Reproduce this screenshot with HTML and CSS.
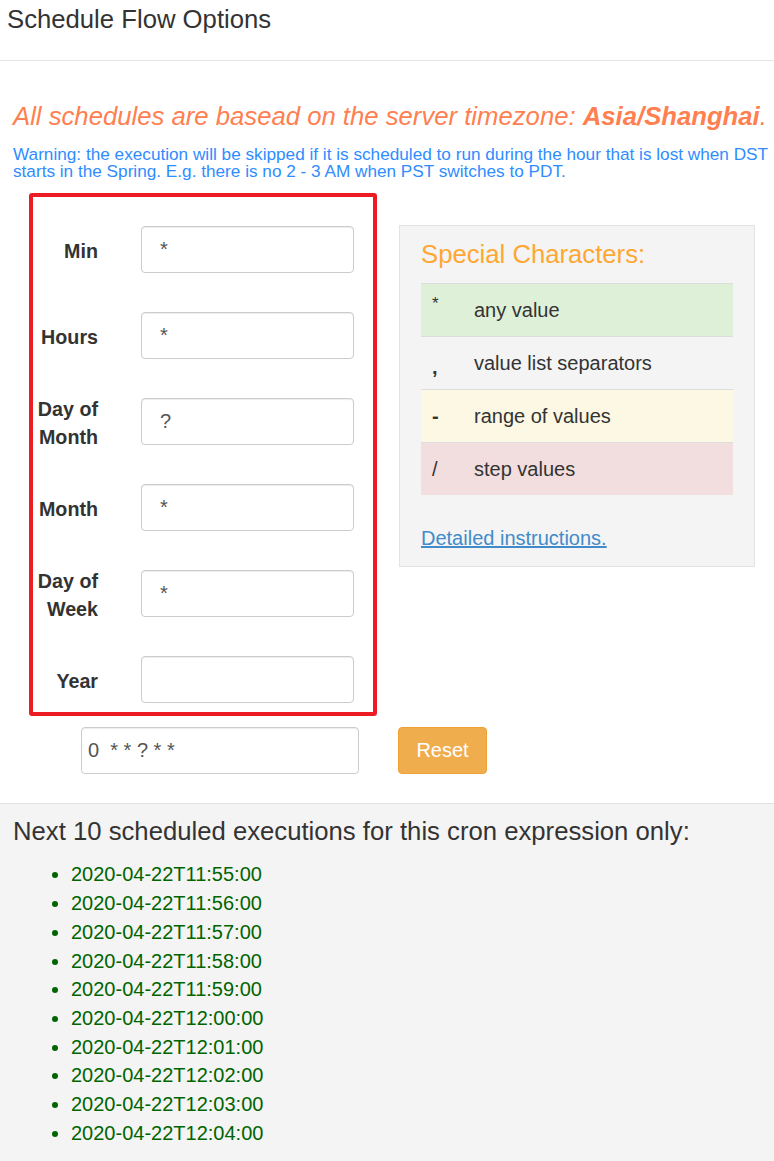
FILE: index.html
```html
<!DOCTYPE html>
<html lang="en">
<head>
<meta charset="utf-8">
<title>Schedule Flow Options</title>
<link rel="stylesheet" href="styles.css">
</head>
<body>
<div class="header">
  <h1 class="title">Schedule Flow Options</h1>
</div>
<div class="content">
  <p class="tz">All schedules are basead on the server timezone: <b>Asia/Shanghai</b>.</p>
  <p class="warn">Warning: the execution will be skipped if it is scheduled to run during the hour that is lost when DST<br>starts in the Spring. E.g. there is no 2 - 3 AM when PST switches to PDT.</p>
  <div class="main">
    <div class="fields">
      <div class="field"><label class="lbl">Min</label><input class="inp" type="text" value="*"></div>
      <div class="field"><label class="lbl">Hours</label><input class="inp" type="text" value="*"></div>
      <div class="field"><label class="lbl">Day of Month</label><input class="inp" type="text" value="?"></div>
      <div class="field"><label class="lbl">Month</label><input class="inp" type="text" value="*"></div>
      <div class="field"><label class="lbl">Day of Week</label><input class="inp" type="text" value="*"></div>
      <div class="field"><label class="lbl">Year</label><input class="inp" type="text" value=""></div>
    </div>
    <div class="panel">
      <div class="panel-title">Special Characters:</div>
      <div class="chars">
        <div class="crow green"><span class="sym sym-star">*</span><span class="desc">any value</span></div>
        <div class="crow"><span class="sym sym-comma">,</span><span class="desc">value list separators</span></div>
        <div class="crow yellow"><span class="sym sym-dash">-</span><span class="desc">range of values</span></div>
        <div class="crow red"><span class="sym">/</span><span class="desc">step values</span></div>
      </div>
      <a class="link" href="#">Detailed instructions.</a>
    </div>
  </div>
  <div class="expr-row">
    <input class="expr" type="text" value="0  * * ? * *">
    <button class="reset" type="button">Reset</button>
  </div>
</div>
<div class="results">
  <h2 class="results-title">Next 10 scheduled executions for this cron expression only:</h2>
  <ul class="list">
    <li>2020-04-22T11:55:00</li>
    <li>2020-04-22T11:56:00</li>
    <li>2020-04-22T11:57:00</li>
    <li>2020-04-22T11:58:00</li>
    <li>2020-04-22T11:59:00</li>
    <li>2020-04-22T12:00:00</li>
    <li>2020-04-22T12:01:00</li>
    <li>2020-04-22T12:02:00</li>
    <li>2020-04-22T12:03:00</li>
    <li>2020-04-22T12:04:00</li>
  </ul>
</div>
</body>
</html>
```
FILE: styles.css
```css
* { box-sizing: border-box; }
html, body {
  margin: 0;
  padding: 0;
  background: #fff;
  font-family: "Liberation Sans", Arial, sans-serif;
  color: #333;
}
.header {
  height: 61px;
  border-bottom: 1px solid #e5e5e5;
  padding: 5px 0 0 7px;
}
.title {
  margin: 0;
  font-size: 25.7px;
  line-height: 28px;
  font-weight: normal;
  color: #333;
}
.content {
  padding: 0 13px;
}
.tz {
  margin: 40px 0 0;
  font-size: 25.7px;
  line-height: 30px;
  font-style: italic;
  color: #ff7f50;
  white-space: nowrap;
}
.warn {
  margin: 15px 0 0;
  font-size: 17.2px;
  line-height: 17.2px;
  color: #2f8cff;
  white-space: nowrap;
}
.main {
  display: flex;
  align-items: flex-start;
  margin-top: 13px;
}
.fields {
  margin-left: 16px;
  width: 348px;
  height: 523px;
  border: 4px solid #ed1c24;
  border-radius: 3px;
  padding: 29px 19px 8px 0;
  display: flex;
  flex-direction: column;
  gap: 39px;
}
.field {
  display: flex;
  align-items: center;
  height: 47px;
}
.lbl {
  width: 65px;
  text-align: right;
  font-weight: bold;
  font-size: 19.7px;
  line-height: 28px;
  color: #333;
  position: relative;
  top: 1px;
}
.inp {
  margin-left: 43px;
  width: 213px;
  height: 47px;
  border: 1px solid #ccc;
  border-radius: 4px;
  box-shadow: inset 0 1px 1px rgba(0,0,0,0.075);
  padding: 0 18px;
  font-family: "Liberation Sans", Arial, sans-serif;
  font-size: 20px;
  color: #555;
  background: #fff;
}
.panel {
  margin-left: 22px;
  margin-top: 32px;
  width: 356px;
  height: 342px;
  background: #f4f4f4;
  border: 1px solid #e3e3e3;
  padding: 13px 21px 0;
}
.panel-title {
  font-size: 25.7px;
  line-height: 30px;
  color: #ffa733;
}
.chars {
  margin-top: 14px;
}
.crow {
  display: flex;
  align-items: center;
  height: 53px;
  border-top: 1px solid #ddd;
  font-size: 20px;
  color: #333;
}
.crow.green { background: #dff0d8; }
.crow.yellow { background: #fcf8e3; }
.crow.red { background: #f2dede; }
.sym {
  width: 53px;
  padding-left: 11px;
}
.sym-star { position: relative; top: -6px; font-size: 17px; }
.sym-comma { position: relative; top: 4px; font-weight: bold; }
.sym-dash { font-weight: bold; }
.link {
  display: block;
  margin-top: 29px;
  font-size: 20px;
  line-height: 28px;
  color: #428bca;
  text-decoration: underline;
}
.expr-row {
  display: flex;
  margin-top: 11px;
  padding-left: 68px;
}
.expr {
  width: 278px;
  height: 47px;
  border: 1px solid #ccc;
  border-radius: 4px;
  box-shadow: inset 0 1px 1px rgba(0,0,0,0.075);
  padding: 0 6px;
  font-family: "Liberation Sans", Arial, sans-serif;
  font-size: 20px;
  color: #555;
}
.reset {
  margin-left: 39px;
  width: 89px;
  height: 47px;
  background: #f0ad4e;
  border: 1px solid #eea236;
  border-radius: 4px;
  color: #fff;
  font-family: "Liberation Sans", Arial, sans-serif;
  font-size: 20px;
  padding: 0;
}
.results {
  margin-top: 29px;
  border-top: 1px solid #e3e3e3;
  background: #f4f4f4;
  padding: 12px 13px 40px;
}
.results-title {
  margin: 0;
  font-size: 25.7px;
  line-height: 30px;
  font-weight: normal;
  color: #333;
}
.list {
  margin: 14px 0 0;
  padding-left: 58px;
  color: #006400;
  font-size: 20px;
  line-height: 28.7px;
}
```
